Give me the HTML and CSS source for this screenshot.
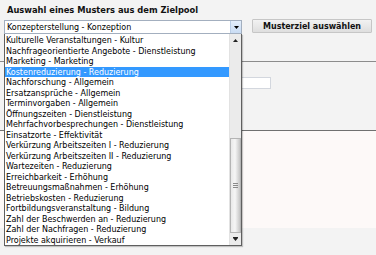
FILE: index.html
```html
<!DOCTYPE html>
<html lang="de">

<head>
    <meta charset="UTF-8">
    <title>Musterauswahl</title>
    <link rel="stylesheet" href="styles.css">
</head>

<body>
    <h1 class="title">Auswahl eines Musters aus dem Zielpool</h1>

    <div class="pick-row">
        <div class="combo">
            <span class="combo-value">Konzepterstellung - Konzeption</span>
            <span class="combo-arrow">
                <svg width="5" height="3" viewBox="0 0 5 3"><path d="M0 0h5L2.5 3z" fill="#000"/></svg>
            </span>

            <div class="combo-list">
                <ul class="options">
                    <li>Kulturelle Veranstaltungen - Kultur</li>
                    <li>Nachfrageorientierte Angebote - Dienstleistung</li>
                    <li>Marketing - Marketing</li>
                    <li class="selected">Kostenreduzierung - Reduzierung</li>
                    <li>Nachforschung - Allgemein</li>
                    <li>Ersatzansprüche - Allgemein</li>
                    <li>Terminvorgaben - Allgemein</li>
                    <li>Öffnungszeiten - Dienstleistung</li>
                    <li>Mehrfachvorbesprechungen - Dienstleistung</li>
                    <li>Einsatzorte - Effektivität</li>
                    <li>Verkürzung Arbeitszeiten I - Reduzierung</li>
                    <li>Verkürzung Arbeitszeiten II - Reduzierung</li>
                    <li>Wartezeiten - Reduzierung</li>
                    <li>Erreichbarkeit - Erhöhung</li>
                    <li>Betreuungsmaßnahmen - Erhöhung</li>
                    <li>Betriebskosten - Reduzierung</li>
                    <li>Fortbildungsveranstaltung - Bildung</li>
                    <li>Zahl der Beschwerden an - Reduzierung</li>
                    <li>Zahl der Nachfragen - Reduzierung</li>
                    <li>Projekte akquirieren - Verkauf</li>
                </ul>
                <div class="scrollbar">
                    <div class="sb-btn">
                        <svg width="5" height="3" viewBox="0 0 5 3"><path d="M0 3h5L2.5 0z" fill="#222"/></svg>
                    </div>
                    <div class="sb-track">
                        <div class="sb-thumb">
                            <span class="grip"></span>
                        </div>
                    </div>
                    <div class="sb-btn">
                        <svg width="5" height="4" viewBox="0 0 5 4"><path d="M0 0h5v1H0zM0 1h5L2.5 4z" fill="#222"/></svg>
                    </div>
                </div>
            </div>
        </div>

        <button class="pick-btn">Musterziel auswählen</button>
    </div>

    <div class="panel-upper">
        <input class="field" type="text">
    </div>

    <div class="panel-lower"></div>
</body>

</html>
```

FILE: styles.css
```css
html {
    height: 100%;
}

body {
    box-sizing: border-box;
    min-height: 100%;
    margin: 0;
    background: #f3f3f3;
    color: #000;
    font-family: "DejaVu Sans Condensed", "DejaVu Sans", sans-serif;
    font-size: 8.9px;
}

.title {
    margin: 0;
    padding: 4px 0 0 7px;
    height: 11px;
    font-size: 9.25px;
    font-weight: bold;
    line-height: 11px;
    color: #111;
}

.pick-row {
    display: flex;
    align-items: flex-start;
    margin-top: 4px;
}

.combo {
    position: relative;
    display: flex;
    box-sizing: border-box;
    width: 238px;
    height: 14px;
    margin: 1px 0 0 4px;
    border: 1px solid #a3afbf;
    background: #fff;
}

.combo-value {
    flex: 1;
    padding: 1px 0 0 2px;
    line-height: 11px;
    white-space: nowrap;
}

.combo-arrow {
    display: flex;
    align-items: center;
    justify-content: center;
    width: 11px;
    background: linear-gradient(#e3eefb, #c9dcf3);
    border-left: 1px solid #b9cde6;
    box-sizing: border-box;
}

/* open drop-down, lies over the page below */
.combo-list {
    position: absolute;
    top: 13px;
    left: -1px;
    z-index: 2;
    display: flex;
    box-sizing: border-box;
    width: 238px;
    height: 212px;
    border: 1px solid #5f5f5f;
    border-top: none;
    background: #fff;
    box-shadow: 1px 1px 1px rgba(0, 0, 0, 0.2);
}

.options {
    flex: 1;
    margin: 0;
    padding: 1px 0 0 0;
    list-style: none;
    overflow: hidden;
}

.options li {
    height: 10.5px;
    padding-left: 1px;
    line-height: 10.5px;
    white-space: nowrap;
    overflow: hidden;
}

.options li.selected {
    background: #3399ff;
    color: #fff;
}

.scrollbar {
    display: flex;
    flex-direction: column;
    width: 11px;
    background: #ebebeb;
    border-left: 1px solid #e2e2e2;
}

.sb-btn {
    display: flex;
    align-items: center;
    justify-content: center;
    height: 12px;
}

.sb-track {
    flex: 1;
}

.sb-thumb {
    display: flex;
    align-items: center;
    justify-content: center;
    box-sizing: border-box;
    height: 95px;
    margin-top: 92px;
    border: 1px solid #b4b4b4;
    background: linear-gradient(90deg, #e9e9e9, #f6f6f6 45%, #c6c6c6);
}

.grip {
    width: 5px;
    height: 5px;
    background: repeating-linear-gradient(#8a8a8a 0 1px, transparent 1px 2px);
}

.pick-btn {
    box-sizing: border-box;
    width: 120px;
    height: 14px;
    margin-left: 10px;
    padding: 0;
    border: 1px solid #c6c6c6;
    border-radius: 1px;
    background: linear-gradient(#f2f2f2, #dedede);
    font-family: inherit;
    font-size: 8.9px;
    font-weight: bold;
    line-height: 12px;
    color: #111;
}

.panel-upper {
    box-sizing: border-box;
    height: 69px;
    margin-top: 27px;
    padding-top: 15px;
    border-top: 1px solid #8c8c8c;
}

.field {
    display: block;
    box-sizing: border-box;
    width: 121px;
    height: 12px;
    margin: 0 0 0 150px;
    padding: 0;
    border: 1px solid #d3d7de;
    background: #fff;
}

.panel-lower {
    height: 97px;
    border-top: 1px solid #707070;
    background: #fdf9f8;
}
```
